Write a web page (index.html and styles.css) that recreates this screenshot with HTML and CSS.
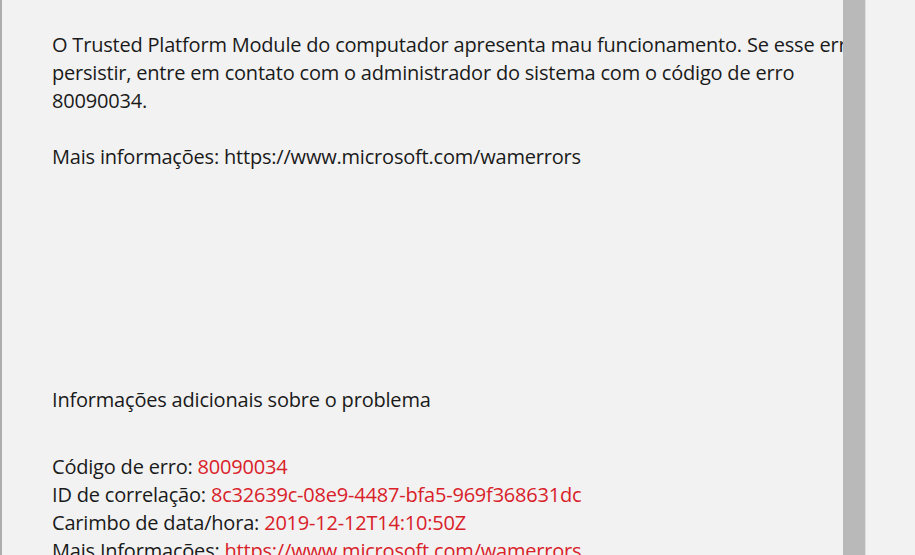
FILE: index.html
```html
<!DOCTYPE html>
<html lang="pt-BR">
<head>
<meta charset="utf-8">
<title>Erro</title>
<link rel="stylesheet" href="styles.css">
</head>
<body>
<div class="window">
  <div class="content">
    <p class="message">O Trusted Platform Module do computador apresenta mau funcionamento. Se esse erro persistir, entre em contato com o administrador do sistema com o código de erro 80090034.</p>
    <p class="more">Mais informações: https://www.microsoft.com/wamerrors</p>
    <h2 class="section-title">Informações adicionais sobre o problema</h2>
    <ul class="details">
      <li>Código de erro: <span class="val">80090034</span></li>
      <li>ID de correlação: <span class="val">8c32639c-08e9-4487-bfa5-969f368631dc</span></li>
      <li>Carimbo de data/hora: <span class="val">2019-12-12T14:10:50Z</span></li>
      <li>Mais Informações: <span class="val">https://www.microsoft.com/wamerrors</span></li>
    </ul>
  </div>
  <div class="scrollbar"></div>
</div>
</body>
</html>
```

FILE: styles.css
```css
html, body {
  margin: 0;
  padding: 0;
  height: 100%;
  overflow: hidden;
  background: #f2f2f2;
}

.window {
  position: relative;
  height: 100%;
  border-left: 2px solid #adadad;
  box-sizing: border-box;
  overflow: hidden;
  font-family: "Open Sans", "Noto Sans", sans-serif;
  font-size: 20px;
  letter-spacing: -0.2px;
  line-height: 28px;
  color: #1a1a1a;
}

.content {
  width: 863px;
  padding: 31px 0 0 50px;
  box-sizing: border-box;
  height: 100%;
}

.message {
  margin: 0;
  width: 820px;
}

.more {
  margin: 28px 0 0;
}

.section-title {
  margin: 215px 0 0;
  font-size: inherit;
  font-weight: normal;
}

.details {
  list-style: none;
  margin: 39px 0 0;
  padding: 0;
}

.val {
  color: #d92129;
}

.scrollbar {
  position: absolute;
  top: 0;
  bottom: 0;
  left: 841px;
  width: 22px;
  background: #b9b9b9;
  border-right: 1px solid #dedede;
}
```
